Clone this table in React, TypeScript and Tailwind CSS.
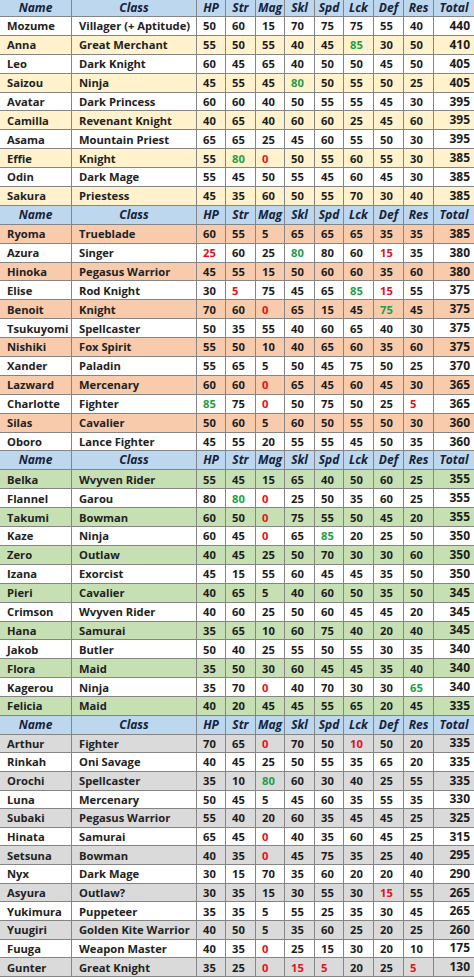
import React from 'react';

type Group = {
  rowBg: string;
  rowH: string;
  headH: string;
  rows: string[][];
};

// values ending in "g" are green (high), "r" are red (low)
const groups: Group[] = [
  {
    rowBg: 'bg-[#fff2cc]',
    rowH: 'h-[18.9px]',
    headH: 'h-[17px]',
    rows: [
      ['Mozume', 'Villager (+ Aptitude)', '50', '60', '15', '70', '75', '75', '55', '40', '440'],
      ['Anna', 'Great Merchant', '55', '50', '55', '40', '45', '85g', '30', '50', '410'],
      ['Leo', 'Dark Knight', '60', '45', '65', '40', '50', '50', '45', '50', '405'],
      ['Saizou', 'Ninja', '45', '55', '45', '80g', '50', '55', '50', '25', '405'],
      ['Avatar', 'Dark Princess', '60', '60', '40', '50', '55', '55', '45', '30', '395'],
      ['Camilla', 'Revenant Knight', '40', '65', '40', '60', '60', '25', '45', '60', '395'],
      ['Asama', 'Mountain Priest', '65', '65', '25', '45', '60', '55', '50', '30', '395'],
      ['Effie', 'Knight', '55', '80g', '0r', '50', '55', '60', '55', '30', '385'],
      ['Odin', 'Dark Mage', '55', '45', '50', '55', '45', '60', '45', '30', '385'],
      ['Sakura', 'Priestess', '45', '35', '60', '50', '55', '70', '30', '40', '385'],
    ],
  },
  {
    rowBg: 'bg-[#f8cbad]',
    rowH: 'h-[18.9px]',
    headH: 'h-[18.9px]',
    rows: [
      ['Ryoma', 'Trueblade', '60', '55', '5', '65', '65', '65', '35', '35', '385'],
      ['Azura', 'Singer', '25r', '60', '25', '80g', '80', '60', '15r', '35', '380'],
      ['Hinoka', 'Pegasus Warrior', '45', '55', '15', '50', '60', '60', '35', '60', '380'],
      ['Elise', 'Rod Knight', '30', '5r', '75', '45', '65', '85g', '15r', '55', '375'],
      ['Benoit', 'Knight', '70', '60', '0r', '65', '15', '45', '75g', '45', '375'],
      ['Tsukuyomi', 'Spellcaster', '50', '35', '55', '40', '60', '65', '40', '30', '375'],
      ['Nishiki', 'Fox Spirit', '55', '50', '10', '40', '65', '60', '35', '60', '375'],
      ['Xander', 'Paladin', '55', '65', '5', '50', '45', '75', '50', '25', '370'],
      ['Lazward', 'Mercenary', '60', '60', '0r', '65', '45', '60', '45', '30', '365'],
      ['Charlotte', 'Fighter', '85g', '75', '0r', '50', '75', '50', '25', '5r', '365'],
      ['Silas', 'Cavalier', '50', '60', '5', '60', '50', '55', '50', '30', '360'],
      ['Oboro', 'Lance Fighter', '45', '55', '20', '55', '55', '45', '50', '35', '360'],
    ],
  },
  {
    rowBg: 'bg-[#c6e0b4]',
    rowH: 'h-[18.9px]',
    headH: 'h-[18.9px]',
    rows: [
      ['Belka', 'Wvyven Rider', '55', '45', '15', '65', '40', '50', '60', '25', '355'],
      ['Flannel', 'Garou', '80', '80g', '0r', '25', '50', '35', '60', '25', '355'],
      ['Takumi', 'Bowman', '60', '50', '0r', '75', '55', '50', '45', '20', '355'],
      ['Kaze', 'Ninja', '60', '45', '0r', '65', '85g', '20', '25', '50', '350'],
      ['Zero', 'Outlaw', '40', '45', '25', '50', '70', '30', '30', '60', '350'],
      ['Izana', 'Exorcist', '45', '15', '55', '60', '45', '45', '35', '50', '350'],
      ['Pieri', 'Cavalier', '40', '65', '5', '40', '60', '50', '35', '50', '345'],
      ['Crimson', 'Wvyven Rider', '40', '60', '25', '50', '60', '45', '45', '20', '345'],
      ['Hana', 'Samurai', '35', '65', '10', '60', '75', '40', '20', '40', '345'],
      ['Jakob', 'Butler', '50', '40', '25', '55', '50', '55', '30', '35', '340'],
      ['Flora', 'Maid', '35', '50', '30', '60', '45', '45', '35', '40', '340'],
      ['Kagerou', 'Ninja', '35', '70', '0r', '40', '70', '30', '30', '65g', '340'],
      ['Felicia', 'Maid', '40', '20', '45', '45', '55', '65', '20', '45', '335'],
    ],
  },
  {
    rowBg: 'bg-[#dadada]',
    rowH: 'h-[18.65px]',
    headH: 'h-[18.65px]',
    rows: [
      ['Arthur', 'Fighter', '70', '65', '0r', '70', '50', '10r', '50', '20', '335'],
      ['Rinkah', 'Oni Savage', '40', '45', '25', '50', '55', '35', '65', '20', '335'],
      ['Orochi', 'Spellcaster', '35', '10', '80g', '60', '30', '40', '25', '55', '335'],
      ['Luna', 'Mercenary', '50', '45', '5', '45', '60', '35', '55', '35', '330'],
      ['Subaki', 'Pegasus Warrior', '55', '40', '20', '60', '35', '45', '45', '25', '325'],
      ['Hinata', 'Samurai', '65', '45', '0r', '40', '35', '60', '45', '25', '315'],
      ['Setsuna', 'Bowman', '40', '35', '0r', '45', '75', '35', '25', '40', '295'],
      ['Nyx', 'Dark Mage', '30', '15', '70', '35', '60', '20', '20', '40', '290'],
      ['Asyura', 'Outlaw?', '30', '35', '15', '30', '55', '30', '15r', '55', '265'],
      ['Yukimura', 'Puppeteer', '35', '35', '5', '55', '25', '35', '30', '45', '265'],
      ['Yuugiri', 'Golden Kite Warrior', '40', '50', '5', '35', '60', '25', '20', '25', '260'],
      ['Fuuga', 'Weapon Master', '40', '35', '0r', '25', '15', '30', '20', '10', '175'],
      ['Gunter', 'Great Knight', '35', '25', '0r', '15r', '5r', '20', '25', '5r', '130'],
    ],
  },
];

const headers = ['Name', 'Class', 'HP', 'Str', 'Mag', 'Skl', 'Spd', 'Lck', 'Def', 'Res', 'Total'];

const gridCols =
  'grid grid-cols-[72px_125px_29px_30px_29px_30px_29px_30px_30px_30px_40px]';

const cellBase = 'flex items-center border-b border-r border-[#858585] overflow-hidden whitespace-nowrap';

const valueColor = (v: string) => {
  if (v.endsWith('g')) return 'text-[#1e9e45]';
  if (v.endsWith('r')) return 'text-[#e3101a]';
  return 'text-[#1c1c1c]';
};

const HeaderRow: React.FC<{ h: string }> = ({ h }) => (
  <div className={`${gridCols} ${h} bg-[#bdd7ee]`}>
    {headers.map((t, i) => (
      <div
        key={t}
        className={`${cellBase} justify-center italic font-bold text-[12px] text-[#16223a] ${
          i === headers.length - 1 ? 'border-r-0 text-[12.5px]' : ''
        }`}
      >
        {t}
      </div>
    ))}
  </div>
);

const DataRow: React.FC<{ row: string[]; bg: string; h: string }> = ({ row, bg, h }) => (
  <div className={`${gridCols} ${h} ${bg}`}>
    <div className={`${cellBase} pl-[7px] text-[#222]`}>{row[0]}</div>
    <div className={`${cellBase} pl-[7px] text-[#222]`}>{row[1]}</div>
    {row.slice(2, 10).map((v, i) => (
      <div key={i} className={`${cellBase} pl-[6px] ${valueColor(v)}`}>
        {v.replace(/[gr]$/, '')}
      </div>
    ))}
    <div className={`${cellBase} border-r-0 justify-end pr-[4px] text-[12px] text-[#1c1c1c]`}>
      {row[10]}
    </div>
  </div>
);

const App: React.FC = () => {
  return (
    <div
      className="w-[474px] bg-white font-bold text-[11.2px] leading-none"
      style={{ fontFamily: '"Open Sans", "Liberation Sans", sans-serif' }}
    >
      {groups.map((g, gi) => (
        <div key={gi}>
          <HeaderRow h={g.headH} />
          {g.rows.map((r, ri) => (
            <DataRow
              key={r[0]}
              row={r}
              h={g.rowH}
              bg={ri % 2 === 1 ? (gi === 0 ? g.rowBg : 'bg-white') : gi === 0 ? 'bg-white' : g.rowBg}
            />
          ))}
        </div>
      ))}
    </div>
  );
};

export default App;
